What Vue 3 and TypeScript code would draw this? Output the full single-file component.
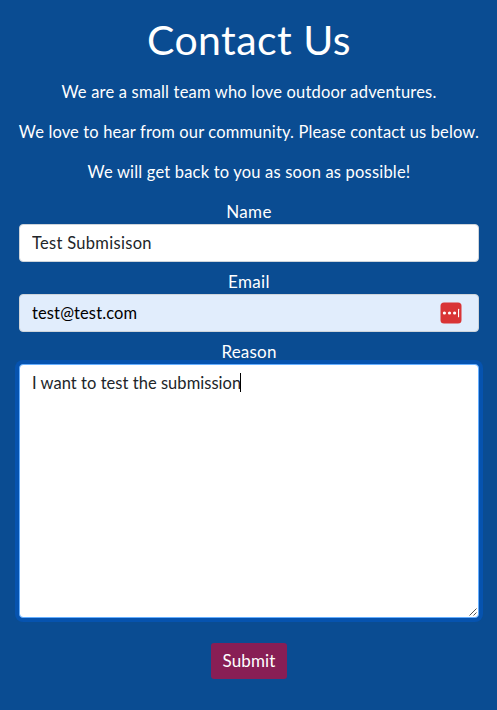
<script setup lang="ts">
import { ref } from 'vue'

const name = ref('Test Submisison')
const email = ref('test@test.com')
const reason = ref('I want to test the submission')
</script>

<template>
  <main class="contact">
    <h1><span class="t-title">Contact Us</span></h1>
    <p><span class="t-team">We are a small team who love outdoor adventures.</span></p>
    <p><span class="t-love">We love to hear from our community. Please contact us below.</span></p>
    <p><span class="t-back">We will get back to you as soon as possible!</span></p>
    <form @submit.prevent>
      <label for="name"><span class="t-name">Name</span></label>
      <input id="name" v-model="name" class="control t-name-value" type="text" />
      <label for="email"><span class="t-email">Email</span></label>
      <div class="control autofilled">
        <input id="email" v-model="email" class="t-email-value" type="email" />
        <svg class="manager" viewBox="0 0 22 22" aria-hidden="true">
          <rect x="0.5" y="0.5" width="21" height="21" rx="3.5" fill="#d93436" />
          <circle cx="4.4" cy="11" r="1.6" fill="#fff" />
          <circle cx="9.5" cy="11" r="1.6" fill="#fff" />
          <circle cx="14.6" cy="11" r="1.6" fill="#fff" />
          <rect x="18" y="6.7" width="1.1" height="8.6" rx="0.5" fill="#fff" />
        </svg>
      </div>
      <label for="reason"><span class="t-reason">Reason</span></label>
      <div id="reason" class="control area" role="textbox" aria-multiline="true">
        <span class="t-reason-value">{{ reason }}</span><i class="caret"></i>
        <svg class="grip" viewBox="0 0 8 8" aria-hidden="true">
          <path d="M0.5 7.5 7.5 0.5M4.5 7.5 7.5 4.5" fill="none" stroke="#555" stroke-width="1" />
        </svg>
      </div>
      <button type="submit"><span class="t-submit">Submit</span></button>
    </form>
  </main>
</template>

<style>
body {
  background: #0a4c92;
}
</style>

<style scoped>
.contact {
  box-sizing: border-box;
  height: 710px;
  padding: 16px 18px 0 19px;
  overflow: hidden;
  background: #0a4c92;
  color: #fff;
  font: 400 16.5px/24px Lato, "Liberation Sans", sans-serif;
  text-align: center;
  white-space: nowrap;
}
h1 {
  margin: 0 0 16px;
  font-size: 41px;
  font-weight: 400;
  line-height: 48px;
}
p {
  height: 24px;
  margin: 0 0 16px;
}
p span {
  display: inline-block;
}
.t-title {
  letter-spacing: 0.45px;
}
.t-team {
  letter-spacing: 0.19px;
}
.t-love {
  margin: 0 -4px;
  letter-spacing: 0.145px;
}
.t-back {
  letter-spacing: 0.19px;
}
label,
button {
  font-size: 17px;
}
.t-name {
  letter-spacing: 0.4px;
}
.t-email {
  letter-spacing: 0.35px;
}
.t-reason {
  letter-spacing: 0.2px;
}
.t-reason-value {
  letter-spacing: 0.04px;
}
.t-submit {
  letter-spacing: 0.15px;
}
form {
  display: flex;
  flex-direction: column;
}
label {
  display: block;
  height: 24px;
}
.control {
  box-sizing: border-box;
  width: 100%;
  height: 38px;
  margin: 0 0 8px;
  padding: 6px 12px;
  border: 1px solid #ced4da;
  border-radius: 4px;
  outline: 0;
  background: #fff;
  color: #212529;
  font: inherit;
  text-align: left;
}
.t-name-value {
  letter-spacing: 0.3px;
}
.autofilled {
  display: flex;
  align-items: center;
  justify-content: space-between;
  padding-right: 16px;
  background: #e1edfc;
}
.autofilled input {
  flex: 1;
  min-width: 0;
  padding: 0;
  border: 0;
  outline: 0;
  background: transparent;
  color: #000;
  font: inherit;
  letter-spacing: 0.12px;
}
.manager {
  width: 22px;
  height: 22px;
}
.area {
  position: relative;
  height: 254px;
  margin-bottom: 25px;
  border-color: #66afff;
  box-shadow: 0 0 0 4px #0653af;
}
.caret {
  display: inline-block;
  width: 1px;
  height: 19px;
  margin-left: -1px;
  background: #000;
  vertical-align: -3px;
}
.grip {
  position: absolute;
  right: 1px;
  bottom: 1px;
  width: 8px;
  height: 8px;
}
button {
  align-self: center;
  width: 76px;
  height: 36px;
  padding: 0;
  border: 0;
  border-radius: 3px;
  background: #881e55;
  color: #fff;
  font-family: inherit;
  font-weight: inherit;
  line-height: inherit;
}
</style>
